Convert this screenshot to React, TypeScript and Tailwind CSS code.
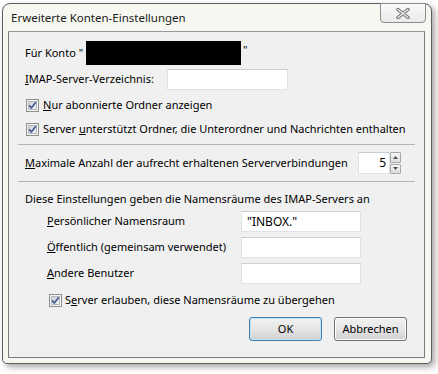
const font = "font-['Segoe_UI','Noto_Sans',sans-serif] text-[11px] text-black whitespace-nowrap";

function CheckBox() {
  return (
    <svg width="13" height="13" viewBox="0 0 13 13" className="shrink-0">
      <defs>
        <linearGradient id="cbg" x1="0" y1="0" x2="1" y2="1">
          <stop offset="0" stopColor="#cbcfd5" />
          <stop offset="1" stopColor="#f6f6f6" />
        </linearGradient>
      </defs>
      <rect x="0.5" y="0.5" width="12" height="12" fill="#f4f4f4" stroke="#8e8f8f" />
      <rect x="2.5" y="2.5" width="8" height="8" fill="url(#cbg)" stroke="#b5b8bd" />
      <path d="M3.2 6.4 L5.3 9 L9.8 3.2" fill="none" stroke="#4a5f97" strokeWidth="1.8" strokeLinejoin="round" />
    </svg>
  );
}

function TextBox({ value, className }: { value?: string; className: string }) {
  return (
    <div
      className={`h-[21px] bg-white border border-[#dfe3e8] border-t-[#c9ced5] flex items-center px-[5px] ${className}`}
    >
      {value}
    </div>
  );
}

function CloseGlyph() {
  return (
    <svg width="14" height="11" viewBox="0 0 14 11">
      <path d="M2 1.5 L12 9.5 M12 1.5 L2 9.5" stroke="#6e6e6e" strokeWidth="3.4" strokeLinecap="round" />
      <path d="M2 1.5 L12 9.5 M12 1.5 L2 9.5" stroke="#f2f2f2" strokeWidth="1.4" strokeLinecap="round" />
    </svg>
  );
}

function Spin() {
  return (
    <div className="flex h-[22px]">
      <div className="w-[32px] bg-white border border-[#dfe3e8] border-t-[#c9ced5] flex items-center justify-end pr-[3px] text-[12px]">
        5
      </div>
      <div className="w-[11px] flex flex-col gap-[1px]">
        <div className="flex-1 border border-[#a7a7a7] rounded-[1px] bg-gradient-to-b from-[#f6f6f6] to-[#dcdcdc] flex items-center justify-center">
          <svg width="5" height="3" viewBox="0 0 5 3">
            <path d="M0 3 L2.5 0 L5 3 Z" fill="#505050" />
          </svg>
        </div>
        <div className="flex-1 border border-[#a7a7a7] rounded-[1px] bg-gradient-to-b from-[#f6f6f6] to-[#dcdcdc] flex items-center justify-center">
          <svg width="5" height="3" viewBox="0 0 5 3">
            <path d="M0 0 L2.5 3 L5 0 Z" fill="#505050" />
          </svg>
        </div>
      </div>
    </div>
  );
}

export default function App() {
  return (
    <div className={`w-[438px] h-[374px] bg-white pt-[3px] pl-[2px] ${font}`}>
      <div className="relative w-[430px] h-[361px] rounded-t-[8px] rounded-b-[5px] border border-[#5e5e5e] bg-[#f7f7f1] shadow-[3px_3px_6px_rgba(0,0,0,0.35)] flex flex-col">
        <div className="absolute top-[-1px] right-[5px] w-[46px] h-[20px] rounded-b-[4px] border border-[#8c8c8c] bg-gradient-to-b from-[#fbfbfb] to-[#e9e9e9] flex items-center justify-center">
          <CloseGlyph />
        </div>
        <div className="h-[27px] flex items-center pl-[8px] text-[#1b1b1b] text-[11.5px]">
          Erweiterte Konten-Einstellungen
        </div>
        <div className="ml-[5px] w-[417px] h-[327px] border border-[#7b7b7b] border-t-[#9a9a9a] bg-[#f0f0f0] px-[9px] flex flex-col">
          <div className="mt-[9px] h-[24px] flex items-center pl-[7px]">
            <span className="w-[61px]">Für Konto "</span>
            <div className="w-[155px] h-[24px] bg-black" />
            <span className="ml-[2px] self-start mt-[1px]">"</span>
          </div>

          <div className="mt-[4px] h-[21px] flex items-center pl-[7px]">
            <span className="w-[142px]">
              <u>I</u>MAP-Server-Verzeichnis:
            </span>
            <TextBox className="w-[121px]" />
          </div>

          <div className="mt-[6px] h-[19px] flex items-center pl-[8px] gap-[4px]">
            <CheckBox />
            <span>
              <u>N</u>ur abonnierte Ordner anzeigen
            </span>
          </div>

          <div className="mt-[5px] h-[19px] flex items-center pl-[8px] gap-[4px]">
            <CheckBox />
            <span>
              Server <u>u</u>nterstützt Ordner, die Unterordner und Nachrichten enthalten
            </span>
          </div>

          <div className="mt-[5px] h-px bg-[#b4b4b4]" />

          <div className="mt-[7px] h-[22px] flex items-center pl-[7px]">
            <span className="w-[333px]">
              <u>M</u>aximale Anzahl der aufrecht erhaltenen Serververbindungen
            </span>
            <Spin />
          </div>

          <div className="mt-[7px] h-px bg-[#b4b4b4]" />

          <div className="mt-[8px] h-[18px] flex items-center pl-[7px]">
            Diese Einstellungen geben die Namensräume des IMAP-Servers an
          </div>

          <div className="mt-[3px] h-[21px] flex items-center pl-[29px]">
            <span className="w-[194px]">
              <u>P</u>ersönlicher Namensraum
            </span>
            <TextBox className="w-[120px] text-[12px]" value={'"INBOX."'} />
          </div>

          <div className="mt-[5px] h-[21px] flex items-center pl-[29px]">
            <span className="w-[194px]">
              <u>Ö</u>ffentlich (gemeinsam verwendet)
            </span>
            <TextBox className="w-[120px]" />
          </div>

          <div className="mt-[5px] h-[21px] flex items-center pl-[29px]">
            <span className="w-[194px]">
              <u>A</u>ndere Benutzer
            </span>
            <TextBox className="w-[120px]" />
          </div>

          <div className="mt-[7px] h-[19px] flex items-center pl-[31px] gap-[3px]">
            <CheckBox />
            <span>
              S<u>e</u>rver erlauben, diese Namensräume zu übergehen
            </span>
          </div>

          <div className="mt-[7px] flex justify-end gap-[12px] pr-[8px]">
            <button className="w-[73px] h-[24px] rounded-[3px] border border-[#3c7fb1] bg-gradient-to-b from-[#f2f2f2] via-[#e6e6e6] to-[#cfcfcf] shadow-[inset_0_0_0_1px_#bfe4f8]">
              OK
            </button>
            <button className="w-[73px] h-[24px] rounded-[3px] border border-[#707070] bg-gradient-to-b from-[#f2f2f2] via-[#e6e6e6] to-[#cfcfcf] shadow-[inset_0_0_0_1px_#fcfcfc]">
              Abbrechen
            </button>
          </div>
        </div>
      </div>
    </div>
  );
}
